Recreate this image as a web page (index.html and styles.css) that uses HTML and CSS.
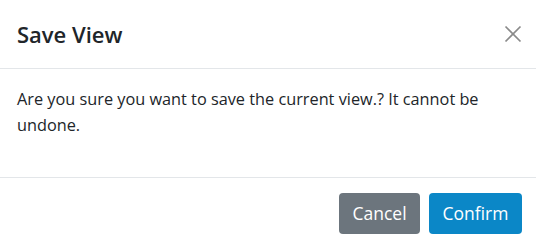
FILE: index.html
```html
<!DOCTYPE html>
<html>
<head>
<meta charset="utf-8">
<link rel="stylesheet" href="styles.css">
</head>
<body>
<div class="modal">
  <div class="modal-header">
    <h5 class="modal-title">Save View</h5>
    <button class="close" aria-label="Close">
      <svg width="18" height="18" viewBox="0 0 18 18"><path d="M1.5 1.5 L16.5 16.5 M16.5 1.5 L1.5 16.5" stroke="#8a8a8a" stroke-width="1.7" fill="none"/></svg>
    </button>
  </div>
  <div class="modal-body">
    <p>Are you sure you want to save the current view.? It cannot be undone.</p>
  </div>
  <div class="modal-footer">
    <button class="btn btn-secondary">Cancel</button>
    <button class="btn btn-primary">Confirm</button>
  </div>
</div>
</body>
</html>
```
FILE: styles.css
```css
html, body {
  margin: 0;
  padding: 0;
  background: #fff;
}
body {
  font-family: "Open Sans", "Noto Sans", sans-serif;
  color: #212529;
  width: 536px;
  height: 245px;
  overflow: hidden;
}
.modal {
  display: flex;
  flex-direction: column;
}
.modal-header {
  height: 68px;
  padding: 0 14px 0 17px;
  display: flex;
  align-items: center;
  justify-content: space-between;
  border-bottom: 1px solid #e3e6e9;
}
.modal-title {
  margin: 0;
  font-size: 22px;
  font-weight: 600;
  line-height: 30px;
  color: #212529;
}
.close {
  background: none;
  border: 0;
  padding: 0;
  margin: 0;
  width: 18px;
  height: 18px;
  display: flex;
  cursor: pointer;
}
.modal-body {
  padding: 17px 17px 0 17px;
  height: 91px;
  border-bottom: 1px solid #e3e6e9;
}
.modal-body p {
  margin: 0;
  font-size: 16.3px;
  line-height: 26px;
}
.modal-footer {
  display: flex;
  justify-content: flex-end;
  gap: 9px;
  padding: 15px 14px 0 0;
}
.btn {
  height: 41px;
  border: 0;
  border-radius: 4px;
  color: #fff;
  font-family: inherit;
  font-size: 17.5px;
  padding: 0;
  line-height: 41px;
}
.btn-secondary {
  background: #6c757d;
  width: 81px;
}
.btn-primary {
  background: #0b87c7;
  width: 93px;
}
```
